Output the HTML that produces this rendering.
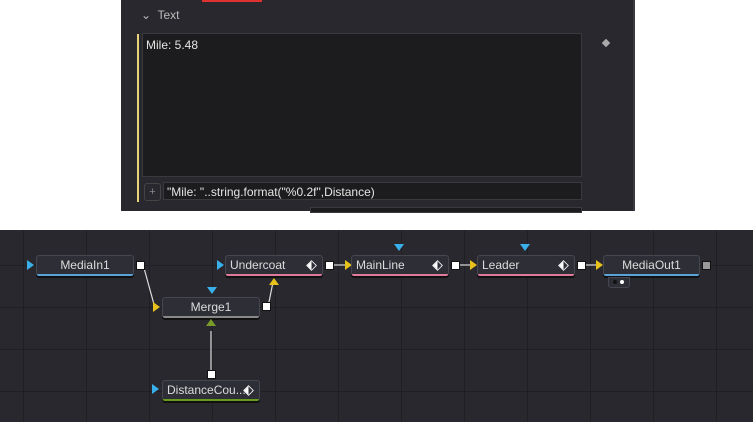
<!DOCTYPE html>
<html><head><style>
body{margin:0;width:753px;height:422px;background:#fff;position:relative;overflow:hidden;font-family:"Liberation Sans",sans-serif}
.p{position:absolute}
.panel{left:121px;top:0;width:512px;height:211px;background:#28282e;border-right:2px solid #3a3a40}
.g{left:0;top:230px;width:753px;height:192px;background:#28282e;
background-image:linear-gradient(90deg,#1f1f24 1px,transparent 1px),linear-gradient(#1f1f24 1px,transparent 1px);
background-size:63px 42px;background-position:23px 35px}
.n{position:absolute;height:19px;background:#2e2f36;border:1px solid #46474e;border-radius:3px;color:#dcdcdc;font-size:12px;line-height:18px;box-shadow:0 2px 0 #111}
.n i{position:absolute;left:0;right:0;bottom:-1px;height:2px;border-radius:0 0 2px 2px}
.sq{position:absolute;width:7px;height:7px;background:#fff;border:1px solid #111}
.tr{position:absolute;width:0;height:0}
.r{border-top:5px solid transparent;border-bottom:5px solid transparent;border-left:7px solid #3ab0ea}
.y{border-left-color:#e8c21a}
.d{border-left:5px solid transparent;border-right:5px solid transparent;border-top:7px solid #3ab0ea}
.u{border-left:5px solid transparent;border-right:5px solid transparent;border-bottom:7px solid #e8c21a}
.k{position:absolute;right:6px;top:5px;width:7px;height:7px;background:linear-gradient(45deg,#fff 50%,#2e2f36 50%);border:1px solid #fff;transform:rotate(45deg) scale(.85)}
</style></head><body>
<div class="p panel">
 <div class="p" style="left:81px;top:0;width:60px;height:2px;background:#e03030"></div>
 <div class="p" style="left:20px;top:8px;color:#bbb;font-size:12px">⌄&nbsp; Text</div>
 <div class="p" style="left:16px;top:34px;width:2px;height:168px;background:#e8d27a"></div>
 <div class="p" style="left:21px;top:33px;width:438px;height:142px;background:#1c1c1e;border:1px solid #3a3a3e"></div>
 <div class="p" style="left:25px;top:38px;color:#e4e4e4;font-size:12px">Mile: 5.48</div>
 <div class="p" style="left:482px;top:40px;width:6px;height:6px;background:#aaa;transform:rotate(45deg)"></div>
 <div class="p" style="left:23px;top:183px;width:15px;height:16px;border:1px solid #444;border-radius:3px;color:#888;font-size:11px;text-align:center;line-height:16px">+</div>
 <div class="p" style="left:42px;top:182px;height:18px;background:#1c1c1e;border:1px solid #3a3a3e;color:#e4e4e4;font-size:12px;line-height:18px;padding-left:3px;box-sizing:border-box;width:419px">"Mile: "..string.format("%0.2f",Distance)</div>
 <div class="p" style="left:189px;top:207px;width:270px;height:4px;background:#1c1c1e;border:1px solid #3a3a3e"></div>
</div>
<div class="p g"></div>
<svg class="p" style="left:0;top:0" width="753" height="422"><g stroke="#ddd" stroke-width="1.2">
<line x1="144" y1="268" x2="155" y2="308"/><line x1="268" y1="307" x2="273" y2="282"/><line x1="211" y1="331" x2="211" y2="372"/>
<line x1="333" y1="265" x2="345" y2="265"/><line x1="459" y1="265" x2="471" y2="265"/><line x1="585" y1="265" x2="597" y2="265"/></g></svg>
<div class="tr r" style="left:27px;top:260px"></div>
<div class="n" style="left:36px;top:255px;width:96px;text-align:center">MediaIn1<i style="background:#5aa2d8"></i></div>
<div class="sq" style="left:136px;top:261px"></div>
<div class="tr r" style="left:217px;top:260px"></div>
<div class="n" style="left:225px;top:255px;padding-left:4px;width:92px">Undercoat<span class="k"></span><i style="background:#e07a9c"></i></div>
<div class="sq" style="left:325px;top:261px"></div>
<div class="tr r y" style="left:345px;top:260px"></div>
<div class="n" style="left:351px;top:255px;width:92px;padding-left:4px">MainLine<span class="k"></span><i style="background:#e07a9c"></i></div>
<div class="tr d" style="left:394px;top:244px"></div>
<div class="sq" style="left:451px;top:261px"></div>
<div class="tr r y" style="left:470px;top:260px"></div>
<div class="n" style="left:477px;top:255px;width:92px;padding-left:4px">Leader<span class="k"></span><i style="background:#e07a9c"></i></div>
<div class="tr d" style="left:520px;top:244px"></div>
<div class="sq" style="left:577px;top:261px"></div>
<div class="tr r y" style="left:596px;top:260px"></div>
<div class="n" style="left:603px;top:255px;width:95px;text-align:center">MediaOut1<i style="background:#5aa2d8"></i></div>
<div class="sq" style="left:702px;top:261px;background:#999"></div>
<div class="p" style="left:608px;top:277px;width:20px;height:9px;background:#2e2f36;border:1px solid #46474e;border-radius:0 0 3px 3px"><span style="position:absolute;left:4px;top:2px;width:4px;height:4px;border-radius:50%;background:#111"></span><span style="position:absolute;left:11px;top:2px;width:4px;height:4px;border-radius:50%;background:#fff"></span></div>
<div class="tr d" style="left:207px;top:287px"></div>
<div class="tr r y" style="left:153px;top:302px"></div>
<div class="n" style="left:162px;top:297px;width:96px;text-align:center">Merge1<i style="background:#888"></i></div>
<div class="sq" style="left:262px;top:302px"></div>
<div class="tr u" style="left:269px;top:278px"></div>
<div class="tr u" style="left:206px;top:319px;border-bottom-color:#7a9a2a"></div>
<div class="sq" style="left:207px;top:370px"></div>
<div class="tr r" style="left:152px;top:384px"></div>
<div class="n" style="left:162px;top:380px;width:92px;padding-left:4px">DistanceCou...<span class="k"></span><i style="background:#6a9a1e"></i></div>
</body></html>
